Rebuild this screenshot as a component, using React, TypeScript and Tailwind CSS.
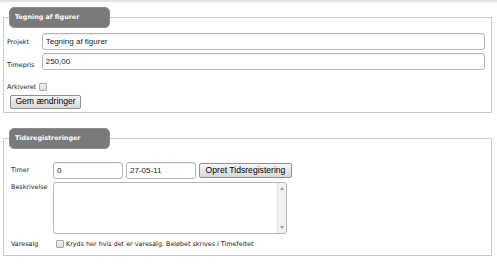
import React from "react";

const label = "font-['DejaVu_Sans',Verdana,sans-serif] text-[6.4px] leading-[8px] text-[#222]";
const input =
  "h-[17px] border border-[#b4b4b4] rounded-[3px] px-[3px] bg-white font-['Liberation_Sans',Arial,sans-serif] text-[8px] text-[#222] shadow-[inset_0_1px_1px_rgba(0,0,0,0.07)] outline-none";
const button =
  "border border-[#8e8e8e] rounded-[2px] bg-linear-to-b from-[#f7f7f7] to-[#d8d8d8] font-['Liberation_Sans',Arial,sans-serif] text-[8.6px] text-black leading-none";
const legend =
  "block w-[101px] h-[21px] rounded-[5px] bg-[#7a7a7a] border border-[#8c8c8c] pl-[5px] ml-[2px] font-['DejaVu_Sans',Verdana,sans-serif] font-bold text-[6.4px] leading-[19px] text-white";
const checkbox =
  "appearance-none w-[8px] h-[8px] border border-[#a8a8a8] bg-linear-to-b from-[#f2f2f2] to-[#dcdcdc] rounded-[1px]";

export default function App() {
  return (
    <div className="w-[497px] h-[270px] bg-white">
      <div className="h-[2px] bg-[#e2e2e2]" />

      {/* Projekt */}
      <fieldset className="mt-[5px] ml-[3px] w-[489px] border border-[#c8c8c8] pl-[3px] pr-[6px] pb-[3px]">
        <legend className={legend}>Tegning af figurer</legend>
        <div className="pt-[5px] flex flex-col">
          <div className="flex items-center">
            <span className={`${label} w-[34.7px]`}>Projekt</span>
            <input className={`${input} flex-1`} defaultValue="Tegning af figurer" />
          </div>
          <div className="flex items-end mt-[3px]">
            <span className={`${label} w-[34.7px] pb-[1px]`}>Timepris</span>
            <input className={`${input} flex-1`} defaultValue="250,00" />
          </div>
          <div className="flex items-center mt-[12.5px] gap-[3px]">
            <span className={label}>Arkiveret</span>
            <input type="checkbox" className={checkbox} />
          </div>
          <div className="flex mt-[4px] ml-[3px]">
            <button className={`${button} w-[71px] h-[14px]`}>Gem ændringer</button>
          </div>
        </div>
      </fieldset>

      {/* Tidsregistreringer */}
      <fieldset className="mt-[15px] ml-[3px] w-[489px] border border-[#c8c8c8] pl-[3px] pr-[6px] pb-[7px]">
        <legend className={legend}>Tidsregistreringer</legend>
        <div className="pt-[13px] pl-[4px] flex flex-col">
          <div className="flex items-center">
            <span className={`${label} w-[42px]`}>Timer</span>
            <input className={`${input} w-[70px]`} defaultValue="0" />
            <input className={`${input} w-[70px] ml-[3px]`} defaultValue="27-05-11" />
            <button className={`${button} w-[93px] h-[15px] ml-[3px]`}>Opret Tidsregistering</button>
          </div>
          <div className="flex items-start mt-[3px]">
            <span className={`${label} w-[42px] pt-[1px]`}>Beskrivelse</span>
            <div className="w-[234px] h-[52px] border border-[#b4b4b4] rounded-[3px] flex overflow-hidden bg-white">
              <textarea className="flex-1 resize-none outline-none px-[3px] font-['Liberation_Sans',Arial,sans-serif] text-[8px]" />
              <div className="w-[9px] bg-[#f1f1f1] border-l border-[#e4e4e4] flex flex-col items-center justify-between py-[4px]">
                <span className="w-0 h-0 border-l-[2px] border-r-[2px] border-b-[3px] border-l-transparent border-r-transparent border-b-[#9a9a9a]" />
                <span className="w-0 h-0 border-l-[2px] border-r-[2px] border-t-[3px] border-l-transparent border-r-transparent border-t-[#9a9a9a]" />
              </div>
            </div>
          </div>
          <div className="flex items-center mt-[6px]">
            <span className={`${label} w-[42px]`}>Varesalg</span>
            <input type="checkbox" className={`${checkbox} ml-[3px]`} />
            <span className={`${label} ml-[2px]`}>Kryds her hvis det er varesalg. Beløbet skrives i Timefeltet</span>
          </div>
        </div>
      </fieldset>
    </div>
  );
}
